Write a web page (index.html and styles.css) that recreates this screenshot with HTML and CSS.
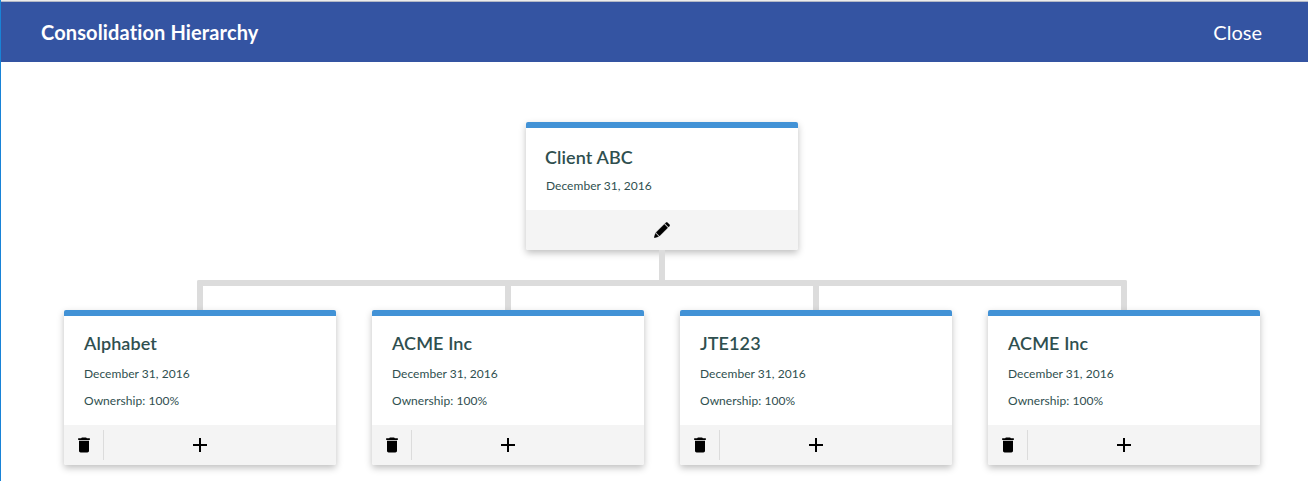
FILE: index.html
```
<!DOCTYPE html>
<html lang="en">
<head>
<meta charset="utf-8">
<title>Consolidation Hierarchy</title>
<link rel="stylesheet" href="styles.css">
</head>
<body>
<svg class="sprite" aria-hidden="true">
  <symbol id="trash" viewBox="0 0 24 24"><path d="M6 19c0 1.100.9 2 2 2h8c1.100 0 2-.9 2-2V7H6v12zM19 4h-3.500l-1-1h-5l-1 1H5v2h14V4z"/></symbol>
  <symbol id="plus" viewBox="0 0 24 24"><path d="M19 13h-6v6h-2v-6H5v-2h6V5h2v6h6v2z"/></symbol>
  <symbol id="pencil" viewBox="0 0 16 16"><path d="M11 1.500 12.100.4q.6-.5 1.200 0l2.300 2.300q.5.600 0 1.200L14.500 5zM10.300 2.200 13.800 5.700 5.500 14 2 10.500zM1.500 11.300 4.700 14.500 1 15.800Q0 16 .2 15z"/></symbol>
</svg>
<div class="window">
  <header class="header">
    <h1 class="header-title">Consolidation Hierarchy</h1>
    <a class="close">Close</a>
  </header>
  <main class="chart">
    <section class="card root">
      <div class="card-body">
        <h2 class="name">Client ABC</h2>
        <p class="detail">December 31, 2016</p>
      </div>
      <div class="actions"><span class="action"><svg class="icon-pencil"><use href="#pencil"/></svg></span></div>
    </section>
    <div class="stem"></div>
    <div class="bracket"><i class="branch"></i><i class="branch"></i></div>
    <div class="children">
      <section class="card">
        <div class="card-body">
          <h2 class="name">Alphabet</h2>
          <p class="detail">December 31, 2016</p>
          <p class="detail">Ownership: 100%</p>
        </div>
        <div class="actions"><span class="remove"><svg class="icon-trash"><use href="#trash"/></svg></span><span class="add"><svg class="icon-plus"><use href="#plus"/></svg></span></div>
      </section>
      <section class="card">
        <div class="card-body">
          <h2 class="name">ACME Inc</h2>
          <p class="detail">December 31, 2016</p>
          <p class="detail">Ownership: 100%</p>
        </div>
        <div class="actions"><span class="remove"><svg class="icon-trash"><use href="#trash"/></svg></span><span class="add"><svg class="icon-plus"><use href="#plus"/></svg></span></div>
      </section>
      <section class="card">
        <div class="card-body">
          <h2 class="name">JTE123</h2>
          <p class="detail">December 31, 2016</p>
          <p class="detail">Ownership: 100%</p>
        </div>
        <div class="actions"><span class="remove"><svg class="icon-trash"><use href="#trash"/></svg></span><span class="add"><svg class="icon-plus"><use href="#plus"/></svg></span></div>
      </section>
      <section class="card">
        <div class="card-body">
          <h2 class="name">ACME Inc</h2>
          <p class="detail">December 31, 2016</p>
          <p class="detail">Ownership: 100%</p>
        </div>
        <div class="actions"><span class="remove"><svg class="icon-trash"><use href="#trash"/></svg></span><span class="add"><svg class="icon-plus"><use href="#plus"/></svg></span></div>
      </section>
    </div>
  </main>
</div>
</body>
</html>
```

FILE: styles.css
```
* { box-sizing: border-box; }
body { margin: 0; background: #fff; font-family: Lato, sans-serif; font-variant-ligatures: none; color: #2f4f4f; overflow: hidden; }
.sprite { display: none; }
.window { height: 481px; border-left: 1px solid #1883d7; overflow: hidden; }
.header {
  height: 62px;
  padding: 2px 46px 0 40px;
  display: flex;
  align-items: center;
  justify-content: space-between;
  background: linear-gradient(#ececec 0 1px, #b4b9c6 1px 2px, #3454a2 2px);
  color: #fff;
}
.header-title { margin: 0; font-size: 20px; line-height: 24px; font-weight: 700; letter-spacing: .13px; }
.close { font-size: 20px; line-height: 24px; }
.chart { padding: 60px 48px 0 63px; display: flex; flex-direction: column; align-items: flex-start; width: 1307px; }
.card {
  width: 272px;
  height: 155px;
  display: flex;
  flex-direction: column;
  border-top: 6px solid #4292d6;
  border-radius: 2px;
  background: #fff;
  box-shadow: 0 3px 7px rgba(0, 0, 0, .25);
}
.root, .stem, .bracket { align-self: center; }
.root { height: 128px; }
.card-body { flex: 1; padding: 16px 20px 0; }
.name { margin: 0 0 11px; font-size: 18px; line-height: 22px; font-weight: 600; letter-spacing: .1px; }
.detail { margin: 0 0 9px; font-size: 12px; line-height: 18px; letter-spacing: .04px; }
.root .card-body { padding-top: 18px; }
.root .name { margin: 0 0 9px -1px; }
.actions { height: 40px; display: flex; align-items: center; background: #f4f4f4; border-radius: 0 0 2px 2px; }
.action { flex: 1; display: flex; justify-content: center; }
.remove { width: 40px; height: 30px; display: flex; align-items: center; justify-content: center; border-right: 1px solid #dcdcdc; padding-left: 1px; }
.add { flex: 1; padding-right: 40px; display: flex; justify-content: center; }
.icon-pencil { width: 16px; height: 16px; fill: #000; stroke: #000; stroke-width: .3; }
.icon-trash { width: 20px; height: 20px; fill: #000; }
.icon-plus { width: 24px; height: 24px; fill: #000; }
.stem { width: 6px; height: 30px; background: #dcdcdc; }
.bracket {
  width: 930px;
  height: 30px;
  display: flex;
  justify-content: space-evenly;
  border: 6px solid #dcdcdc;
  border-bottom: 0;
  border-radius: 2px 2px 0 0;
}
.branch { width: 6px; background: #dcdcdc; }
.children { display: flex; gap: 36px; }
```
